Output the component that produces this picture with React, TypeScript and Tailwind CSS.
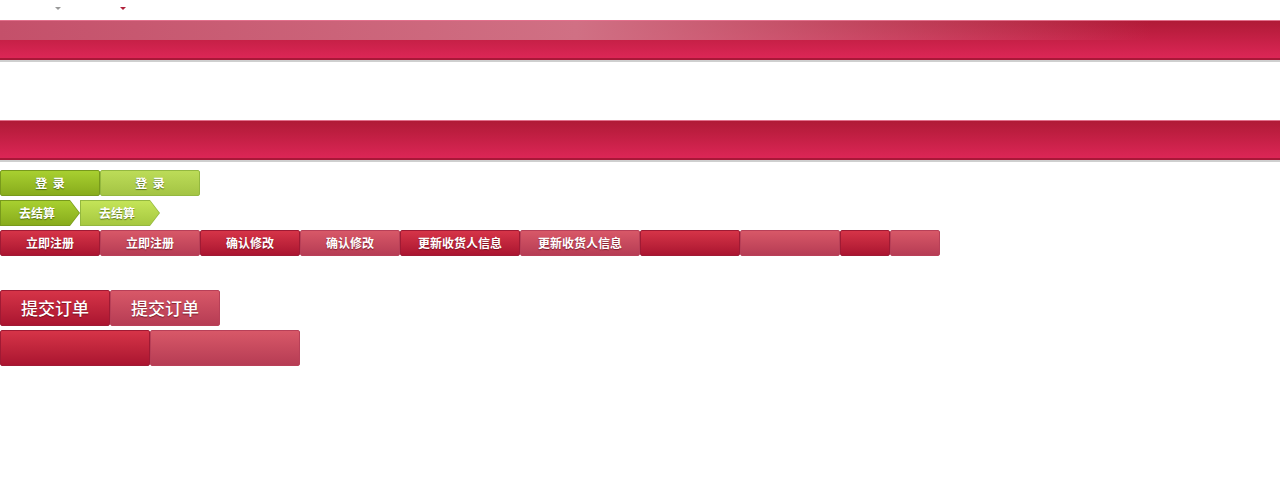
import React from "react";

const cjk = { fontFamily: '"Noto Sans CJK SC", "Liberation Sans", sans-serif' };

function Bar({ glossy }: { glossy?: boolean }) {
  return (
    <div className="w-full">
      <div className="relative h-[40px] w-full overflow-hidden border-t border-b-2 border-t-[#e2708c] border-b-[#a81838] bg-gradient-to-b from-[#b01a36] to-[#dc2656]">
        {glossy && (
          <div className="absolute inset-x-0 top-0 h-[19px] bg-gradient-to-r from-[#c4506a] via-[#d07084] via-45% to-transparent to-90%" />
        )}
      </div>
      <div className="h-[2px] w-full bg-[#cfcfcf]" />
    </div>
  );
}

function RedBtn({ w, h = 26, light, text, big }: { w: number; h?: number; light?: boolean; text?: string; big?: boolean }) {
  return (
    <div
      style={{ ...cjk, width: w, height: h }}
      className={`flex items-center justify-center rounded-[2px] border text-white ${
        light
          ? "border-[#b84058] bg-gradient-to-b from-[#d85868] to-[#b63c54]"
          : "border-[#a01a34] bg-gradient-to-b from-[#d63448] to-[#aa1430]"
      } ${big ? "text-[17px] font-medium" : "text-[12px] font-bold"} [text-shadow:0_1px_1px_rgba(80,0,10,0.6)]`}
    >
      {text}
    </div>
  );
}

function GreenBtn({ light }: { light?: boolean }) {
  return (
    <div
      style={cjk}
      className={`flex h-[26px] w-[100px] items-center justify-center rounded-[2px] border text-[12px] font-bold text-white [text-shadow:0_1px_1px_rgba(40,60,0,0.6)] ${
        light
          ? "border-[#94b840] bg-gradient-to-b from-[#bcdc58] to-[#a4c444]"
          : "border-[#789a1c] bg-gradient-to-b from-[#a8d030] to-[#88ac1c]"
      }`}
    >
      登&nbsp;&nbsp;录
    </div>
  );
}

function ArrowBtn({ light }: { light?: boolean }) {
  return (
    <div
      className={`h-[26px] w-[80px] p-px [clip-path:polygon(0_0,70px_0,80px_13px,70px_26px,0_26px)] ${
        light ? "bg-[#94b840]" : "bg-[#789a1c]"
      }`}
    >
      <div
        style={cjk}
        className={`flex h-full w-full items-center justify-center pr-[6px] text-[12px] font-bold text-white [clip-path:polygon(0_0,69px_0,78px_12px,69px_24px,0_24px)] [text-shadow:0_1px_1px_rgba(40,60,0,0.6)] ${
          light ? "bg-gradient-to-b from-[#c4e458] to-[#a6c840]" : "bg-gradient-to-b from-[#a8d030] to-[#88ac1c]"
        }`}
      >
        去结算
      </div>
    </div>
  );
}

export default function App() {
  return (
    <div className="h-[500px] w-[1280px] bg-white">
      {/* top dropdown markers */}
      <div className="relative h-[20px]">
        <span className="absolute left-[55px] top-[7px] h-0 w-0 border-x-[3px] border-t-[3px] border-x-transparent border-t-[#999]" />
        <span className="absolute left-[120px] top-[7px] h-0 w-0 border-x-[3px] border-t-[3px] border-x-transparent border-t-[#b0203a]" />
      </div>

      <Bar glossy />
      <div className="h-[58px]" />
      <Bar />

      <div className="mt-[8px] flex flex-col gap-[4px]">
        <div className="flex">
          <GreenBtn />
          <GreenBtn light />
        </div>
        <div className="flex">
          <ArrowBtn />
          <ArrowBtn light />
        </div>
        <div className="flex">
          <RedBtn w={100} text="立即注册" />
          <RedBtn w={100} text="立即注册" light />
          <RedBtn w={100} text="确认修改" />
          <RedBtn w={100} text="确认修改" light />
          <RedBtn w={120} text="更新收货人信息" />
          <RedBtn w={120} text="更新收货人信息" light />
          <RedBtn w={100} />
          <RedBtn w={100} light />
          <RedBtn w={50} />
          <RedBtn w={50} light />
        </div>
      </div>

      <div className="mt-[34px] flex flex-col gap-[4px]">
        <div className="flex">
          <RedBtn w={110} h={36} text="提交订单" big />
          <RedBtn w={110} h={36} text="提交订单" big light />
        </div>
        <div className="flex">
          <RedBtn w={150} h={36} />
          <RedBtn w={150} h={36} light />
        </div>
      </div>
    </div>
  );
}
